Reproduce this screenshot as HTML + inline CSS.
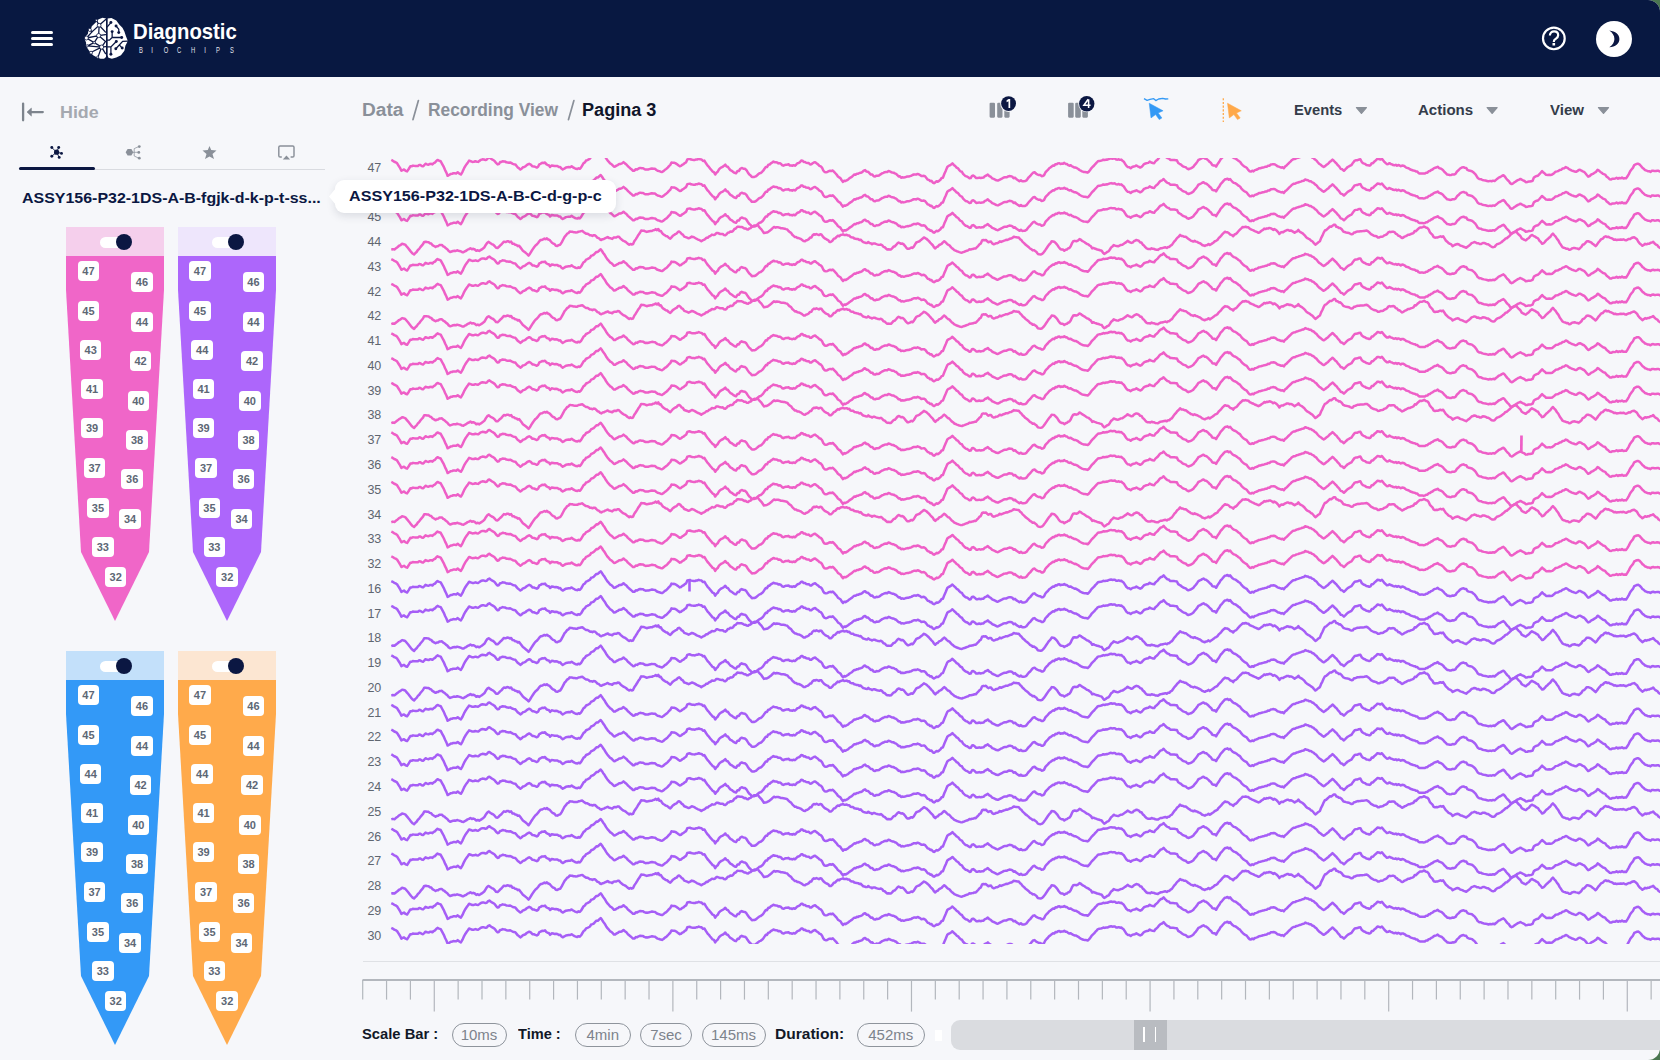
<!DOCTYPE html>
<html><head><meta charset="utf-8">
<style>
*{margin:0;padding:0;box-sizing:border-box}
html,body{width:1660px;height:1060px;overflow:hidden;background:#4a7650}
body{font-family:"Liberation Sans",sans-serif;position:relative}
#app{position:absolute;left:0;top:0;width:1660px;height:1060px;background:#f6f7fa;border-radius:0 12px 12px 0;overflow:hidden}
.abs{position:absolute}
#hdr{position:absolute;left:0;top:0;width:1660px;height:76.5px;background:#081841}
.t{position:absolute;white-space:nowrap;line-height:1}
.pill{position:absolute;height:24px;border:1.3px solid #8e949c;border-radius:12px;color:#7d838c;font-size:15px;line-height:21px;text-align:center}
.lbl{position:absolute;width:21.5px;height:20px;background:#fff;border-radius:4px;color:#5d6775;font-weight:bold;font-size:11px;line-height:20px;text-align:center}
.ch{position:absolute;font-size:12.5px;color:#5f6670;text-align:right;width:30px;line-height:1}
</style></head><body>
<div id="app">
<div id="hdr">
  <!-- hamburger -->
  <div class="abs" style="left:31px;top:31px;width:22px;height:2.6px;background:#fff;border-radius:2px"></div>
  <div class="abs" style="left:31px;top:37px;width:22px;height:2.6px;background:#fff;border-radius:2px"></div>
  <div class="abs" style="left:31px;top:43px;width:22px;height:2.6px;background:#fff;border-radius:2px"></div>
  <!-- logo -->
  <svg class="abs" style="left:80px;top:12px" width="55" height="52" viewBox="0 0 1121 1060">
    <path fill="#fff" d="M530 130 L460 118 L380 150 L335 200 L240 290 L225 345 L170 385 L160 450 L105 505 L100 565 L125 625 L120 690 L165 760 L215 830 L275 885 L350 925 L420 955 L490 955 L530 915 Z"/>
    <path fill="#fff" d="M560 135 L640 122 L740 175 L800 255 L865 320 L905 400 L935 490 L975 590 L925 690 L905 790 L835 880 L740 925 L650 955 L580 935 L560 880 Z"/>
    <g stroke="#0b1742" stroke-width="26" fill="none" stroke-linecap="round">
      <path d="M390 270 L530 150 M390 270 L250 400 M390 270 L520 410 M390 270 L380 480 M390 270 L335 170 M380 480 L130 530 M380 480 L520 460 M380 480 L520 600 M380 480 L290 625 M130 530 L250 400 M200 370 L250 400 M130 530 L290 625 M290 625 L440 715 M440 715 L520 600 M440 715 L525 705 M440 715 L370 910 M440 715 L520 850 M440 715 L150 690 M440 715 L230 820 M150 690 L290 625"/>
      <path d="M560 300 L630 215 M735 285 L790 350 L790 420 M655 400 L655 520 L600 575 L560 575 M655 520 L850 520 M740 600 L630 710 L560 710 M630 710 L630 860 M975 595 L870 600 L730 750 M810 680 L860 735"/>
    </g>
    <g fill="#0b1742"><circle cx="630" cy="215" r="30"/><circle cx="735" cy="285" r="30"/><circle cx="790" cy="420" r="30"/><circle cx="655" cy="400" r="30"/><circle cx="850" cy="520" r="30"/><circle cx="740" cy="600" r="30"/><circle cx="630" cy="860" r="30"/><circle cx="730" cy="750" r="30"/><circle cx="860" cy="735" r="30"/></g>
    <g fill="#fff" stroke="#0b1742" stroke-width="16"><circle cx="390" cy="270" r="38"/><circle cx="380" cy="480" r="42"/><circle cx="440" cy="715" r="42"/><circle cx="130" cy="530" r="40"/><circle cx="200" cy="365" r="32"/><circle cx="335" cy="170" r="22"/><circle cx="290" cy="625" r="24"/><circle cx="145" cy="690" r="24"/><circle cx="225" cy="830" r="30"/><circle cx="360" cy="920" r="22"/></g>
    <path fill="#0b1742" d="M533 100 L558 100 L558 990 L533 990 Z"/>
  </svg>
<div class="t" style="left:130.5px;top:44.95px;width:20px;text-align:center;font-size:9.7px;color:#e4e7ee;transform:scaleX(0.6)">B</div><div class="t" style="left:142.4px;top:44.95px;width:20px;text-align:center;font-size:9.7px;color:#e4e7ee;transform:scaleX(0.6)">I</div><div class="t" style="left:155.6px;top:44.95px;width:20px;text-align:center;font-size:9.7px;color:#e4e7ee;transform:scaleX(0.6)">O</div><div class="t" style="left:169.2px;top:44.95px;width:20px;text-align:center;font-size:9.7px;color:#e4e7ee;transform:scaleX(0.6)">C</div><div class="t" style="left:182.6px;top:44.95px;width:20px;text-align:center;font-size:9.7px;color:#e4e7ee;transform:scaleX(0.6)">H</div><div class="t" style="left:195.2px;top:44.95px;width:20px;text-align:center;font-size:9.7px;color:#e4e7ee;transform:scaleX(0.6)">I</div><div class="t" style="left:208.3px;top:44.95px;width:20px;text-align:center;font-size:9.7px;color:#e4e7ee;transform:scaleX(0.6)">P</div><div class="t" style="left:221.8px;top:44.95px;width:20px;text-align:center;font-size:9.7px;color:#e4e7ee;transform:scaleX(0.6)">S</div>
  <!-- help -->
  <svg class="abs" style="left:1536px;top:20px" width="36" height="36" viewBox="1536 20 36 36">
   <circle cx="1553.85" cy="38.4" r="10.85" stroke="#fff" stroke-width="2.2" fill="none"/>
   <path d="M1549.9 35.6 C1549.9 33 1551.7 31.4 1554.1 31.4 C1556.5 31.4 1558.2 33 1558.2 35.2 C1558.2 37.4 1556.6 38.2 1555.3 39.1 C1554.3 39.8 1553.8 40.5 1553.8 41.9" stroke="#fff" stroke-width="2.2" fill="none"/>
   <rect x="1552.5" y="43" width="2.6" height="2.5" fill="#fff"/>
  </svg>
  <!-- moon -->
  <div class="abs" style="left:1596px;top:20.5px;width:36px;height:36px;background:#fff;border-radius:50%"></div>
  <svg class="abs" style="left:1596px;top:20.5px" width="36" height="36" viewBox="0 0 36 36"><path fill="#0b1742" d="M13.3 9.5 C19.5 10.2 23.4 13.5 23.4 17.9 C23.4 22.5 19.5 25.8 13.3 26.3 C16.7 24 18.4 21 18.4 17.9 C18.4 14.8 16.7 11.8 13.3 9.5 Z"/></svg>
</div>

<!-- left panel -->
<svg class="abs" style="left:15px;top:98px" width="35" height="28" viewBox="15 98 35 28"><g stroke="#7d848d" stroke-width="2.3" stroke-linecap="round" fill="none"><path d="M23.1 103.6 L23.1 120.3 M30.5 112.1 L42.8 112.1"/></g><path d="M27 112.1 L31.4 108.1 L31.4 116.1 Z" fill="#7d848d" stroke="#7d848d" stroke-width="0.6" stroke-linejoin="round"/></svg>


<div class="abs" style="left:19px;top:168.5px;width:306px;height:1px;background:#d9dbe0"></div>
<div class="abs" style="left:18.5px;top:166.5px;width:76.5px;height:3.4px;background:#0b1742;border-radius:2px"></div>


<div class="abs" style="left:66px;top:227px;width:98px;height:29.5px;background:#f5cfec"></div>
<svg class="abs" style="left:66px;top:227px" width="98" height="396" viewBox="0 0 98 396"><polygon points="0,29 98,29 98,63 83,325 49,394 15,325 0,63" fill="#f066c8"/></svg>
<div class="abs" style="left:100px;top:237px;width:22px;height:10.5px;background:#fff;border-radius:6px"></div>
<div class="abs" style="left:116.3px;top:234px;width:16.2px;height:16.2px;background:#0b1742;border-radius:50%"></div>
<div class="lbl" style="left:77.65px;top:261.00px">47</div>
<div class="lbl" style="left:131.15px;top:272.30px">46</div>
<div class="lbl" style="left:77.65px;top:300.50px">45</div>
<div class="lbl" style="left:131.15px;top:311.60px">44</div>
<div class="lbl" style="left:79.95px;top:340.00px">43</div>
<div class="lbl" style="left:129.85px;top:351.00px">42</div>
<div class="lbl" style="left:81.25px;top:379.30px">41</div>
<div class="lbl" style="left:127.55px;top:390.50px">40</div>
<div class="lbl" style="left:81.25px;top:418.40px">39</div>
<div class="lbl" style="left:126.25px;top:429.70px">38</div>
<div class="lbl" style="left:83.75px;top:458.00px">37</div>
<div class="lbl" style="left:121.45px;top:469.30px">36</div>
<div class="lbl" style="left:87.15px;top:497.50px">35</div>
<div class="lbl" style="left:119.25px;top:508.80px">34</div>
<div class="lbl" style="left:92.05px;top:536.70px">33</div>
<div class="lbl" style="left:104.95px;top:567.30px">32</div>
<div class="abs" style="left:177.5px;top:227px;width:98px;height:29.5px;background:#eee6fc"></div>
<svg class="abs" style="left:177.5px;top:227px" width="98" height="396" viewBox="0 0 98 396"><polygon points="0,29 98,29 98,63 83,325 49,394 15,325 0,63" fill="#ad66fb"/></svg>
<div class="abs" style="left:211.5px;top:237px;width:22px;height:10.5px;background:#fff;border-radius:6px"></div>
<div class="abs" style="left:227.8px;top:234px;width:16.2px;height:16.2px;background:#0b1742;border-radius:50%"></div>
<div class="lbl" style="left:189.15px;top:261.00px">47</div>
<div class="lbl" style="left:242.65px;top:272.30px">46</div>
<div class="lbl" style="left:189.15px;top:300.50px">45</div>
<div class="lbl" style="left:242.65px;top:311.60px">44</div>
<div class="lbl" style="left:191.45px;top:340.00px">44</div>
<div class="lbl" style="left:241.35px;top:351.00px">42</div>
<div class="lbl" style="left:192.75px;top:379.30px">41</div>
<div class="lbl" style="left:239.05px;top:390.50px">40</div>
<div class="lbl" style="left:192.75px;top:418.40px">39</div>
<div class="lbl" style="left:237.75px;top:429.70px">38</div>
<div class="lbl" style="left:195.25px;top:458.00px">37</div>
<div class="lbl" style="left:232.95px;top:469.30px">36</div>
<div class="lbl" style="left:198.65px;top:497.50px">35</div>
<div class="lbl" style="left:230.75px;top:508.80px">34</div>
<div class="lbl" style="left:203.55px;top:536.70px">33</div>
<div class="lbl" style="left:216.45px;top:567.30px">32</div>
<div class="abs" style="left:66px;top:651px;width:98px;height:29.5px;background:#c3e0fa"></div>
<svg class="abs" style="left:66px;top:651px" width="98" height="396" viewBox="0 0 98 396"><polygon points="0,29 98,29 98,63 83,325 49,394 15,325 0,63" fill="#3399f7"/></svg>
<div class="abs" style="left:100px;top:661px;width:22px;height:10.5px;background:#fff;border-radius:6px"></div>
<div class="abs" style="left:116.3px;top:658px;width:16.2px;height:16.2px;background:#0b1742;border-radius:50%"></div>
<div class="lbl" style="left:77.65px;top:685.00px">47</div>
<div class="lbl" style="left:131.15px;top:696.30px">46</div>
<div class="lbl" style="left:77.65px;top:724.50px">45</div>
<div class="lbl" style="left:131.15px;top:735.60px">44</div>
<div class="lbl" style="left:79.95px;top:764.00px">44</div>
<div class="lbl" style="left:129.85px;top:775.00px">42</div>
<div class="lbl" style="left:81.25px;top:803.30px">41</div>
<div class="lbl" style="left:127.55px;top:814.50px">40</div>
<div class="lbl" style="left:81.25px;top:842.40px">39</div>
<div class="lbl" style="left:126.25px;top:853.70px">38</div>
<div class="lbl" style="left:83.75px;top:882.00px">37</div>
<div class="lbl" style="left:121.45px;top:893.30px">36</div>
<div class="lbl" style="left:87.15px;top:921.50px">35</div>
<div class="lbl" style="left:119.25px;top:932.80px">34</div>
<div class="lbl" style="left:92.05px;top:960.70px">33</div>
<div class="lbl" style="left:104.95px;top:991.30px">32</div>
<div class="abs" style="left:177.5px;top:651px;width:98px;height:29.5px;background:#fce6d2"></div>
<svg class="abs" style="left:177.5px;top:651px" width="98" height="396" viewBox="0 0 98 396"><polygon points="0,29 98,29 98,63 83,325 49,394 15,325 0,63" fill="#ffaa4b"/></svg>
<div class="abs" style="left:211.5px;top:661px;width:22px;height:10.5px;background:#fff;border-radius:6px"></div>
<div class="abs" style="left:227.8px;top:658px;width:16.2px;height:16.2px;background:#0b1742;border-radius:50%"></div>
<div class="lbl" style="left:189.15px;top:685.00px">47</div>
<div class="lbl" style="left:242.65px;top:696.30px">46</div>
<div class="lbl" style="left:189.15px;top:724.50px">45</div>
<div class="lbl" style="left:242.65px;top:735.60px">44</div>
<div class="lbl" style="left:191.45px;top:764.00px">44</div>
<div class="lbl" style="left:241.35px;top:775.00px">42</div>
<div class="lbl" style="left:192.75px;top:803.30px">41</div>
<div class="lbl" style="left:239.05px;top:814.50px">40</div>
<div class="lbl" style="left:192.75px;top:842.40px">39</div>
<div class="lbl" style="left:237.75px;top:853.70px">38</div>
<div class="lbl" style="left:195.25px;top:882.00px">37</div>
<div class="lbl" style="left:232.95px;top:893.30px">36</div>
<div class="lbl" style="left:198.65px;top:921.50px">35</div>
<div class="lbl" style="left:230.75px;top:932.80px">34</div>
<div class="lbl" style="left:203.55px;top:960.70px">33</div>
<div class="lbl" style="left:216.45px;top:991.30px">32</div>

<!-- breadcrumb -->
<svg class="abs" style="left:400px;top:95px" width="190" height="30" viewBox="400 95 190 30"><path d="M418.4 100.6 L413 119.6 M573.9 100.6 L568.5 119.6" stroke="#8a9099" stroke-width="1.7" stroke-linecap="round"/></svg>


<!-- toolbar -->

<div class="ch" style="left:351.3px;top:161.7px">47</div>
<div class="ch" style="left:351.3px;top:186.5px">46</div>
<div class="ch" style="left:351.3px;top:211.2px">45</div>
<div class="ch" style="left:351.3px;top:236.0px">44</div>
<div class="ch" style="left:351.3px;top:260.8px">43</div>
<div class="ch" style="left:351.3px;top:285.6px">42</div>
<div class="ch" style="left:351.3px;top:310.3px">42</div>
<div class="ch" style="left:351.3px;top:335.1px">41</div>
<div class="ch" style="left:351.3px;top:359.9px">40</div>
<div class="ch" style="left:351.3px;top:384.6px">39</div>
<div class="ch" style="left:351.3px;top:409.4px">38</div>
<div class="ch" style="left:351.3px;top:434.2px">37</div>
<div class="ch" style="left:351.3px;top:458.9px">36</div>
<div class="ch" style="left:351.3px;top:483.7px">35</div>
<div class="ch" style="left:351.3px;top:508.5px">34</div>
<div class="ch" style="left:351.3px;top:533.2px">33</div>
<div class="ch" style="left:351.3px;top:558.0px">32</div>
<div class="ch" style="left:351.3px;top:582.8px">16</div>
<div class="ch" style="left:351.3px;top:607.6px">17</div>
<div class="ch" style="left:351.3px;top:632.3px">18</div>
<div class="ch" style="left:351.3px;top:657.1px">19</div>
<div class="ch" style="left:351.3px;top:681.9px">20</div>
<div class="ch" style="left:351.3px;top:706.6px">21</div>
<div class="ch" style="left:351.3px;top:731.4px">22</div>
<div class="ch" style="left:351.3px;top:756.2px">23</div>
<div class="ch" style="left:351.3px;top:781.0px">24</div>
<div class="ch" style="left:351.3px;top:805.7px">25</div>
<div class="ch" style="left:351.3px;top:830.5px">26</div>
<div class="ch" style="left:351.3px;top:855.3px">27</div>
<div class="ch" style="left:351.3px;top:880.0px">28</div>
<div class="ch" style="left:351.3px;top:904.8px">29</div>
<div class="ch" style="left:351.3px;top:929.6px">30</div>
<svg class="abs" style="left:0;top:158px" width="1660" height="786" viewBox="0 158 1660 786">
<defs>
<path id="pA" d="M391.3 -7.52 L392.7 -6.82 L394.2 -5.75 L395.6 -5.22 L397.0 -4.35 L398.5 -1.93 L400.0 0.38 L401.4 3.24 L402.7 2.53 L404.0 1.98 L405.6 3.33 L407.1 3.88 L408.7 1.50 L410.3 -1.19 L411.6 -1.13 L412.8 -1.82 L414.1 -1.67 L415.4 -1.55 L416.6 -1.56 L417.9 -1.57 L419.2 -2.61 L420.4 -2.45 L421.7 -1.51 L423.0 -1.19 L424.2 -2.27 L425.5 -3.72 L427.1 -3.10 L428.6 -2.83 L429.9 -3.53 L431.2 -3.63 L432.4 -3.09 L433.7 -4.36 L435.0 -4.98 L436.2 -6.42 L437.5 -7.52 L439.1 -6.77 L440.7 -6.25 L442.2 -3.42 L443.8 -0.55 L445.1 2.59 L446.4 5.12 L447.6 8.31 L449.2 7.47 L450.8 6.41 L452.0 6.34 L453.3 5.75 L454.6 5.77 L456.2 5.89 L457.7 4.76 L459.3 6.10 L460.9 7.04 L462.5 4.31 L464.1 0.71 L465.3 -1.41 L466.6 -3.35 L467.9 -5.11 L469.1 -6.88 L470.7 -6.29 L472.3 -5.62 L473.9 -5.71 L475.4 -6.25 L476.7 -5.84 L478.0 -5.62 L479.5 -6.62 L480.9 -7.65 L482.4 -8.15 L484.0 -8.02 L485.6 -7.52 L486.8 -7.92 L488.1 -9.50 L489.4 -10.05 L490.6 -9.12 L491.9 -8.21 L493.2 -7.52 L494.6 -6.58 L496.1 -4.55 L497.6 -3.09 L498.9 -3.41 L500.1 -5.39 L501.4 -5.58 L502.6 -6.25 L503.9 -5.97 L505.2 -5.91 L506.4 -5.12 L507.7 -4.98 L509.0 -4.80 L510.2 -5.09 L511.5 -4.35 L512.8 -3.63 L514.0 -3.27 L515.3 -3.09 L516.6 -1.48 L517.8 -0.04 L519.1 0.84 L520.4 1.98 L521.6 1.18 L522.9 -0.18 L524.2 -0.55 L525.4 -1.12 L526.7 -2.36 L527.9 -3.09 L529.2 -3.72 L530.8 -2.91 L532.4 -1.19 L533.9 -1.11 L535.3 -0.53 L536.8 0.08 L538.1 -0.72 L539.3 -3.18 L540.6 -3.72 L542.1 -4.67 L543.5 -4.48 L545.0 -4.98 L546.3 -3.36 L547.6 -2.56 L548.8 -2.35 L550.1 -0.55 L551.7 -2.09 L553.2 -1.82 L554.6 -1.44 L556.0 -1.58 L557.4 -1.46 L558.8 -0.46 L560.2 -0.55 L561.5 1.11 L562.7 1.98 L564.3 1.08 L565.9 0.08 L567.3 -0.15 L568.7 -0.40 L570.2 -0.30 L571.6 -1.19 L573.1 -0.12 L574.5 0.69 L576.0 1.34 L577.3 1.54 L578.5 0.78 L579.8 1.34 L581.1 -0.09 L582.3 -2.11 L583.6 -4.35 L584.9 -5.11 L586.1 -6.96 L587.4 -7.43 L588.7 -8.15 L589.9 -8.86 L591.2 -10.83 L592.5 -11.25 L593.7 -11.83 L595.0 -13.21 L596.4 -14.70 L597.8 -14.66 L599.3 -16.05 L600.7 -17.26 L602.0 -15.55 L603.2 -13.60 L604.5 -11.95 L606.1 -9.18 L607.7 -6.88 L608.9 -5.63 L610.2 -4.04 L611.4 -3.48 L612.7 -2.17 L614.0 -0.81 L615.2 -0.98 L616.5 -1.89 L617.8 -2.45 L619.2 -3.50 L620.6 -3.57 L622.0 -4.11 L623.5 -5.36 L624.9 -4.13 L626.4 -3.08 L627.9 -1.19 L629.2 -0.13 L630.4 0.97 L631.7 2.03 L633.0 3.24 L634.4 3.18 L635.8 1.73 L637.2 1.99 L638.6 0.96 L640.2 0.38 L641.8 0.71 L643.1 0.74 L644.3 1.57 L645.6 2.07 L646.9 1.98 L648.1 2.03 L649.4 1.60 L650.7 1.27 L651.9 0.96 L653.5 1.21 L655.1 1.34 L656.4 2.50 L657.6 3.24 L659.1 3.60 L660.6 4.19 L662.0 4.51 L663.5 3.61 L664.9 2.29 L666.3 1.46 L667.7 0.08 L669.0 -1.41 L670.3 -2.57 L671.5 -4.98 L672.8 -4.66 L674.1 -4.72 L675.3 -4.35 L676.8 -3.43 L678.3 -2.25 L679.8 -1.19 L681.0 -1.57 L682.3 -2.74 L683.6 -3.34 L684.8 -4.47 L686.1 -5.21 L687.3 -8.06 L688.6 -8.40 L689.9 -8.63 L691.1 -7.96 L692.4 -7.73 L693.7 -7.61 L694.9 -7.52 L696.2 -8.09 L697.5 -8.12 L698.7 -8.78 L700.2 -8.21 L701.6 -8.02 L703.0 -6.48 L704.4 -6.88 L706.0 -4.22 L707.6 -1.82 L708.9 -0.54 L710.1 1.10 L711.4 2.53 L712.6 4.06 L713.9 4.58 L715.2 7.04 L716.4 5.28 L717.7 4.24 L719.0 1.87 L720.2 0.71 L721.5 -0.20 L722.8 -0.72 L724.0 -1.64 L725.3 -2.83 L726.6 -0.94 L727.8 -0.72 L729.1 1.12 L730.4 2.61 L731.8 3.28 L733.2 4.42 L734.6 5.38 L736.0 5.77 L737.5 3.48 L738.9 3.51 L740.3 1.27 L741.7 0.46 L743.3 1.15 L744.9 1.34 L746.3 2.45 L747.7 4.70 L749.1 6.71 L750.5 7.87 L751.9 9.57 L753.1 9.43 L754.4 9.44 L755.7 8.94 L756.9 7.94 L758.2 6.80 L759.5 5.77 L760.7 5.48 L762.0 4.46 L763.2 3.24 L764.5 1.24 L765.8 -0.55 L767.0 -0.45 L768.3 -2.74 L769.6 -2.88 L770.8 -4.19 L772.1 -4.94 L773.4 -5.87 L774.6 -5.32 L775.9 -5.20 L777.2 -4.98 L778.4 -4.12 L779.7 -4.27 L781.0 -3.63 L782.2 -2.23 L783.5 -1.82 L784.8 -2.50 L786.0 -2.86 L787.3 -2.83 L788.5 -3.19 L789.8 -2.04 L791.1 -2.06 L792.3 -1.63 L793.6 -2.33 L794.9 -1.82 L796.1 -2.83 L797.4 -4.26 L798.7 -4.58 L799.9 -5.30 L801.2 -6.88 L802.5 -6.78 L803.7 -5.48 L805.0 -5.62 L806.3 -4.63 L807.5 -4.42 L808.8 -4.43 L810.1 -3.09 L811.3 -3.15 L812.6 -4.26 L813.9 -5.01 L815.1 -5.36 L816.5 -4.18 L818.0 -3.13 L819.4 -1.69 L820.8 -1.19 L822.1 0.34 L823.3 3.02 L824.6 4.51 L826.0 4.79 L827.3 4.53 L828.7 3.68 L830.1 3.23 L831.5 3.61 L832.8 2.99 L834.1 4.38 L835.4 5.74 L836.6 7.04 L837.9 9.02 L839.2 9.88 L840.4 10.62 L841.7 12.77 L843.0 14.38 L844.2 13.15 L845.5 13.54 L846.7 12.79 L848.0 12.10 L849.3 10.87 L850.5 10.08 L851.8 9.37 L853.1 8.08 L854.3 7.04 L855.6 7.14 L856.9 6.26 L858.1 6.28 L859.4 5.52 L860.8 5.33 L862.2 4.65 L863.7 3.10 L865.1 2.61 L866.5 4.03 L867.9 4.15 L869.4 5.54 L870.8 7.04 L872.3 6.97 L873.7 8.69 L875.2 8.94 L876.5 8.20 L877.7 8.34 L879.0 8.05 L880.6 6.84 L882.2 5.77 L883.4 5.31 L884.7 4.65 L886.0 4.49 L887.2 4.60 L888.5 3.50 L889.8 3.92 L891.0 4.51 L892.3 5.09 L893.6 5.14 L894.8 5.91 L896.1 6.38 L897.3 7.47 L898.6 8.90 L899.9 8.77 L901.1 10.21 L902.4 9.77 L903.7 10.12 L904.9 9.83 L906.2 9.32 L907.5 9.07 L908.7 9.10 L910.0 8.62 L911.3 8.31 L912.5 7.50 L913.8 6.98 L915.1 6.94 L916.3 7.12 L917.6 6.41 L918.9 6.92 L920.1 7.52 L921.4 8.56 L922.6 8.41 L923.9 8.26 L925.2 8.94 L926.4 10.48 L927.7 12.10 L929.0 12.39 L930.2 13.65 L931.5 13.38 L932.8 15.06 L934.0 15.65 L935.3 14.85 L936.6 13.81 L937.8 14.20 L939.1 13.37 L940.4 12.22 L941.6 10.46 L942.9 10.21 L944.4 6.30 L945.8 3.14 L947.3 -0.55 L948.6 -1.61 L949.8 -2.05 L951.1 -2.94 L952.4 -4.10 L953.8 -2.59 L955.2 -1.45 L956.6 0.18 L958.1 0.96 L959.3 2.56 L960.6 3.85 L961.9 4.30 L963.1 6.41 L964.4 7.62 L965.7 8.65 L966.9 8.96 L968.2 9.78 L969.5 10.84 L970.7 10.61 L972.0 8.35 L973.2 8.05 L974.7 9.07 L976.2 10.61 L977.7 10.58 L979.2 10.12 L980.6 10.58 L982.1 10.21 L983.5 10.09 L984.9 8.58 L986.4 8.03 L987.8 7.04 L989.3 8.63 L990.7 9.25 L992.2 10.84 L993.6 11.38 L995.1 12.08 L996.5 12.84 L997.9 13.12 L999.4 12.34 L1000.9 11.53 L1002.3 10.84 L1003.7 10.02 L1005.1 9.80 L1006.5 9.79 L1007.9 9.05 L1009.3 8.56 L1010.7 8.66 L1012.2 9.08 L1013.6 10.75 L1015.0 10.21 L1016.5 11.75 L1018.0 12.71 L1019.4 13.62 L1020.9 12.69 L1022.3 13.85 L1023.7 13.80 L1025.1 13.62 L1026.4 12.91 L1027.7 11.14 L1028.9 9.65 L1030.2 8.55 L1031.4 7.04 L1033.0 5.20 L1034.6 4.76 L1036.2 6.27 L1037.8 7.04 L1039.0 7.54 L1040.3 7.55 L1041.6 8.66 L1042.8 8.56 L1044.1 7.64 L1045.4 4.92 L1046.6 3.61 L1047.9 2.39 L1049.2 0.71 L1050.4 -0.03 L1051.7 -1.05 L1053.0 -2.07 L1054.2 -1.77 L1055.5 -3.34 L1056.7 -3.15 L1058.0 -4.13 L1059.3 -4.37 L1060.5 -3.45 L1061.8 -3.89 L1063.1 -3.77 L1064.3 -4.61 L1065.6 -3.62 L1066.9 -3.53 L1068.1 -2.42 L1069.4 -1.82 L1070.7 -2.18 L1071.9 -1.25 L1073.2 -0.58 L1074.5 0.06 L1075.7 0.03 L1077.0 0.71 L1078.3 1.46 L1079.5 2.46 L1080.8 3.22 L1082.0 3.88 L1083.5 4.42 L1084.9 4.58 L1086.3 4.71 L1087.7 5.14 L1089.0 4.00 L1090.3 2.31 L1091.5 0.57 L1092.8 -0.78 L1094.1 -1.98 L1095.3 -3.44 L1096.6 -4.77 L1097.9 -6.25 L1099.2 -6.53 L1100.6 -6.74 L1102.0 -7.12 L1103.3 -7.80 L1104.7 -7.47 L1106.1 -7.90 L1107.3 -7.83 L1108.6 -8.37 L1109.9 -8.91 L1111.1 -9.16 L1112.4 -8.68 L1113.7 -8.88 L1114.9 -8.90 L1116.2 -7.90 L1117.5 -7.87 L1118.7 -8.23 L1120.0 -7.63 L1121.3 -7.90 L1122.5 -6.77 L1123.8 -5.80 L1125.1 -3.71 L1126.3 -1.82 L1127.8 -0.41 L1129.3 -0.27 L1130.7 0.71 L1132.2 -0.48 L1133.6 -0.96 L1135.0 -1.19 L1136.4 -2.07 L1137.7 -1.18 L1139.0 -0.58 L1140.2 0.08 L1141.5 -0.53 L1142.8 -1.95 L1144.0 -3.34 L1145.5 -3.98 L1146.9 -4.39 L1148.3 -4.64 L1149.7 -5.87 L1151.2 -5.01 L1152.7 -4.49 L1154.2 -4.35 L1155.4 -6.13 L1156.7 -7.19 L1157.9 -8.27 L1159.2 -10.03 L1160.5 -11.31 L1162.1 -11.88 L1163.6 -13.21 L1164.9 -11.73 L1166.2 -10.35 L1167.4 -9.42 L1168.9 -9.02 L1170.3 -7.55 L1171.7 -7.54 L1173.1 -7.52 L1174.4 -7.47 L1175.7 -7.23 L1176.9 -7.14 L1178.2 -4.49 L1179.5 -3.72 L1180.7 -3.06 L1182.0 -1.85 L1183.2 -1.03 L1184.5 -0.61 L1185.8 -0.25 L1187.0 1.01 L1188.3 1.72 L1189.6 1.22 L1190.8 0.86 L1192.1 0.11 L1193.4 -0.81 L1194.6 -2.48 L1195.9 -3.85 L1197.2 -5.64 L1198.4 -7.52 L1199.7 -8.08 L1201.0 -8.76 L1202.2 -9.50 L1203.5 -10.05 L1204.8 -9.01 L1206.0 -8.85 L1207.3 -7.90 L1208.5 -6.88 L1209.8 -5.40 L1211.1 -4.46 L1212.3 -2.45 L1213.6 -2.06 L1214.9 -2.08 L1216.1 -0.81 L1217.6 -3.50 L1219.1 -5.50 L1220.6 -8.15 L1222.0 -9.55 L1223.5 -11.38 L1225.0 -12.96 L1226.3 -13.11 L1227.5 -13.60 L1228.8 -12.49 L1230.1 -13.21 L1231.3 -11.76 L1232.6 -10.29 L1233.9 -9.42 L1235.4 -8.97 L1237.0 -7.90 L1238.5 -6.57 L1240.0 -5.77 L1241.4 -3.72 L1242.7 -2.38 L1244.0 -1.27 L1245.2 -0.55 L1246.7 0.24 L1248.2 2.38 L1249.7 3.88 L1250.9 4.10 L1252.2 3.24 L1253.5 3.88 L1254.9 2.59 L1256.2 2.23 L1257.6 1.75 L1259.0 0.84 L1260.4 0.71 L1261.7 0.30 L1263.0 -0.04 L1264.2 -0.33 L1265.5 -0.72 L1266.7 -0.86 L1268.0 -1.82 L1269.4 -1.78 L1270.9 -3.05 L1272.3 -3.14 L1273.7 -3.34 L1275.0 -3.00 L1276.2 -2.29 L1277.5 -1.19 L1278.8 -0.84 L1280.0 -0.43 L1281.3 0.13 L1282.6 -0.24 L1283.8 0.71 L1285.2 -1.11 L1286.6 -2.04 L1287.9 -3.47 L1289.3 -4.89 L1290.7 -6.17 L1292.0 -7.52 L1293.5 -8.42 L1295.0 -8.53 L1296.5 -9.42 L1297.9 -9.71 L1299.4 -10.29 L1300.9 -10.68 L1302.3 -11.30 L1303.7 -11.50 L1305.2 -12.80 L1306.6 -12.20 L1308.0 -12.00 L1309.4 -11.07 L1310.8 -11.07 L1312.2 -9.90 L1313.6 -9.42 L1315.0 -7.94 L1316.4 -7.06 L1317.8 -5.23 L1319.2 -3.72 L1320.7 -2.78 L1322.2 -1.44 L1323.7 -0.55 L1325.1 -1.39 L1326.6 -2.68 L1328.1 -3.72 L1329.6 -5.42 L1331.1 -6.56 L1332.5 -7.90 L1333.8 -6.74 L1335.1 -5.27 L1336.3 -4.35 L1337.8 -2.35 L1339.3 -0.81 L1340.7 1.34 L1342.3 1.81 L1343.9 3.24 L1345.2 2.00 L1346.4 0.76 L1347.7 -0.48 L1349.0 -1.19 L1350.2 -1.86 L1351.5 -2.45 L1353.1 -4.85 L1354.7 -6.88 L1356.1 -7.16 L1357.5 -7.33 L1358.9 -7.98 L1360.4 -8.15 L1361.9 -5.29 L1363.5 -4.10 L1364.9 -3.64 L1366.4 -2.56 L1367.8 -2.35 L1369.2 -1.82 L1370.5 -2.26 L1371.7 -4.36 L1373.0 -4.35 L1374.5 -6.10 L1376.0 -7.22 L1377.4 -8.78 L1378.9 -8.57 L1380.4 -7.94 L1381.9 -8.78 L1383.1 -7.31 L1384.4 -5.60 L1385.7 -4.42 L1386.9 -3.34 L1388.2 -3.50 L1389.5 -4.35 L1390.7 -3.54 L1392.0 -3.14 L1393.2 -2.45 L1394.5 -2.19 L1395.8 -2.68 L1397.0 -1.79 L1398.3 -2.50 L1399.6 -1.97 L1400.8 -1.22 L1402.1 -1.98 L1403.4 -1.82 L1404.8 -1.05 L1406.2 0.12 L1407.5 0.47 L1408.9 0.93 L1410.3 1.98 L1411.8 2.49 L1413.3 3.03 L1414.8 3.24 L1416.0 4.06 L1417.3 4.08 L1418.5 5.54 L1419.8 6.07 L1421.1 6.03 L1422.3 6.03 L1423.6 6.12 L1424.9 6.03 L1426.1 5.20 L1427.4 5.19 L1428.7 3.75 L1429.9 3.57 L1431.2 2.48 L1432.5 1.98 L1433.7 0.89 L1435.0 0.31 L1436.4 0.02 L1437.7 -0.78 L1439.1 0.58 L1440.4 0.98 L1441.8 1.62 L1443.1 2.75 L1444.5 4.48 L1445.8 5.62 L1447.2 7.08 L1448.6 7.19 L1449.9 7.63 L1451.3 7.49 L1452.6 6.89 L1454.0 7.08 L1455.5 6.38 L1457.0 4.03 L1458.5 2.79 L1460.1 0.98 L1461.8 0.07 L1463.5 -0.37 L1464.8 0.35 L1466.2 0.46 L1467.5 2.47 L1468.9 3.05 L1470.2 3.29 L1471.9 3.73 L1473.6 5.05 L1475.0 6.31 L1476.3 8.08 L1477.7 10.47 L1479.3 11.57 L1480.9 11.65 L1482.4 12.50 L1484.0 12.81 L1485.5 13.06 L1487.0 13.47 L1488.5 13.85 L1490.1 13.39 L1491.6 13.72 L1493.1 13.13 L1494.6 13.58 L1496.0 12.38 L1497.3 11.34 L1498.7 10.06 L1500.3 9.46 L1501.9 8.44 L1503.4 7.76 L1504.8 9.01 L1506.2 10.97 L1507.5 12.50 L1508.9 13.68 L1510.2 15.77 L1511.6 16.56 L1512.8 16.10 L1514.1 15.05 L1515.4 14.19 L1516.6 13.37 L1517.9 12.55 L1519.1 12.02 L1520.4 11.41 L1521.7 12.14 L1523.1 12.85 L1524.5 13.49 L1525.8 14.66 L1527.2 14.53 L1528.5 14.05 L1529.9 14.08 L1531.2 13.85 L1532.6 13.28 L1533.9 10.02 L1535.3 9.11 L1536.7 8.45 L1538.0 8.16 L1539.4 6.73 L1540.7 5.24 L1542.1 3.69 L1543.4 5.06 L1544.8 6.05 L1546.1 7.35 L1547.7 7.41 L1549.2 7.23 L1550.7 7.42 L1552.2 7.08 L1554.3 5.45 L1555.6 4.15 L1557.0 3.89 L1558.3 3.58 L1559.7 2.59 L1561.1 2.34 L1562.6 1.06 L1564.2 0.76 L1565.8 -0.37 L1567.4 0.30 L1569.0 1.66 L1570.5 2.34 L1571.9 3.12 L1573.2 3.46 L1574.6 4.05 L1576.0 4.37 L1577.3 3.66 L1578.7 2.51 L1580.0 2.34 L1581.4 3.01 L1582.7 3.86 L1584.1 4.37 L1585.4 5.76 L1586.8 7.50 L1588.2 9.11 L1589.7 8.48 L1591.3 6.99 L1592.9 6.40 L1594.5 5.28 L1596.1 4.36 L1597.6 2.34 L1599.0 3.16 L1600.4 4.42 L1601.7 5.33 L1603.1 6.40 L1605.1 7.08 L1606.7 9.21 L1608.3 10.35 L1609.8 11.82 L1611.2 11.95 L1612.6 11.18 L1613.9 11.23 L1615.3 11.04 L1616.6 10.21 L1618.0 11.18 L1619.3 10.47 L1620.7 10.87 L1622.0 10.00 L1623.4 10.98 L1624.8 10.74 L1626.1 10.87 L1627.5 8.82 L1628.8 6.58 L1630.2 3.70 L1631.5 1.95 L1632.9 0.35 L1634.2 -2.40 L1635.6 -3.06 L1637.0 -3.67 L1638.3 -3.76 L1639.7 -2.89 L1641.0 -1.49 L1642.4 0.31 L1643.7 1.27 L1645.1 2.61 L1646.4 3.00 L1647.8 3.69 L1649.2 3.72 L1650.5 4.38 L1651.9 3.33 L1653.2 3.22 L1654.6 3.59 L1655.9 3.54 L1657.3 3.29 L1658.6 3.33 L1660.0 4.10 L1661.3 3.48 L1662.7 3.80 L1664.1 3.58 L1665.4 3.29" fill="none" stroke-linejoin="round"/>
<path id="pB" d="M391.3 7.93 L392.9 7.33 L394.5 7.68 L396.1 6.34 L397.7 5.15 L399.1 3.90 L400.6 3.20 L402.1 1.98 L403.7 2.38 L405.2 2.87 L406.7 4.65 L408.2 6.37 L409.7 8.31 L411.1 10.17 L412.6 11.76 L414.1 12.74 L415.4 11.18 L416.6 10.20 L417.9 8.20 L419.2 7.04 L420.4 5.33 L421.7 3.83 L423.0 2.37 L424.2 0.08 L425.7 0.03 L427.2 0.22 L428.6 0.34 L429.9 1.38 L431.2 1.74 L432.4 3.25 L434.0 4.20 L435.6 5.15 L436.9 4.43 L438.1 4.33 L439.4 3.31 L440.7 3.25 L441.9 3.17 L443.2 4.53 L444.5 5.15 L445.9 6.51 L447.3 7.48 L448.7 9.26 L450.1 10.21 L451.6 9.69 L453.1 9.15 L454.6 8.94 L455.8 9.18 L457.1 8.51 L458.4 8.89 L459.6 9.20 L460.9 9.61 L462.2 10.35 L463.4 10.46 L464.8 9.59 L466.2 8.95 L467.6 7.80 L469.0 7.33 L470.4 6.41 L471.9 7.43 L473.3 7.01 L474.8 7.68 L476.3 9.04 L477.8 8.46 L479.2 9.20 L480.5 8.36 L481.8 7.57 L483.0 6.66 L484.5 5.39 L485.9 2.93 L487.3 0.97 L488.7 0.08 L490.2 1.23 L491.7 2.23 L493.2 2.87 L494.6 4.19 L496.1 6.01 L497.6 6.16 L498.9 4.97 L500.1 3.72 L501.4 2.70 L502.6 1.23 L503.9 -0.17 L505.5 0.24 L507.1 -0.55 L508.4 -0.45 L509.8 0.40 L511.1 -0.16 L512.5 1.91 L513.9 2.03 L515.2 3.04 L516.6 3.25 L517.8 4.34 L519.1 3.88 L520.4 5.57 L521.6 7.16 L522.9 8.94 L524.3 9.97 L525.7 11.05 L527.2 12.32 L528.6 13.75 L530.0 11.83 L531.4 9.46 L532.8 7.32 L534.3 5.15 L535.5 3.69 L536.8 2.69 L538.1 1.15 L539.3 -0.48 L540.6 -1.82 L541.9 -1.91 L543.1 -2.53 L544.4 -3.22 L545.7 -2.61 L546.9 -3.46 L548.2 -2.32 L549.5 -1.87 L550.7 -0.55 L552.0 0.95 L553.2 1.79 L554.5 2.21 L555.8 3.88 L557.3 4.12 L558.7 3.32 L560.2 2.87 L561.7 0.57 L563.2 -2.29 L564.6 -4.98 L565.9 -6.36 L567.2 -8.20 L568.4 -8.62 L569.7 -10.30 L571.0 -10.11 L572.2 -10.05 L573.5 -9.64 L574.8 -9.56 L576.0 -9.41 L577.3 -9.48 L578.5 -10.18 L579.8 -10.37 L581.1 -10.68 L582.3 -10.94 L583.6 -9.82 L584.9 -8.91 L586.1 -8.17 L587.4 -8.15 L588.7 -7.45 L589.9 -6.50 L591.2 -6.54 L592.5 -5.93 L593.7 -6.62 L595.0 -6.50 L596.3 -5.30 L597.5 -4.02 L598.8 -3.68 L600.1 -2.31 L601.3 -1.82 L602.6 -2.65 L603.9 -2.91 L605.1 -3.59 L606.4 -4.10 L607.7 -4.73 L609.2 -3.69 L610.8 -3.46 L612.2 -2.85 L613.6 -4.21 L614.9 -4.43 L616.3 -4.30 L617.7 -5.11 L619.0 -4.98 L620.6 -3.22 L622.2 -1.82 L623.5 -0.89 L624.7 -0.48 L626.0 0.34 L627.6 1.79 L629.2 2.87 L630.4 2.14 L631.7 2.80 L633.0 2.36 L634.3 -0.47 L635.7 -2.45 L637.1 -4.67 L638.4 -6.90 L639.8 -8.72 L641.2 -11.31 L642.6 -11.08 L644.0 -11.05 L645.3 -10.51 L646.7 -9.93 L648.1 -10.30 L649.4 -10.61 L650.7 -10.80 L651.9 -10.80 L653.2 -11.56 L654.5 -11.78 L655.7 -12.66 L657.0 -11.62 L658.3 -12.83 L659.5 -10.70 L660.8 -10.89 L662.0 -8.86 L663.3 -7.51 L664.6 -6.73 L665.8 -5.90 L667.1 -5.61 L668.7 -4.11 L670.3 -3.08 L671.5 -4.45 L672.8 -5.99 L674.1 -6.88 L675.3 -7.70 L676.6 -8.22 L677.9 -9.84 L679.1 -10.30 L680.4 -9.40 L681.7 -7.77 L682.9 -7.20 L684.2 -5.23 L685.7 -4.74 L687.1 -4.21 L688.6 -3.46 L690.2 -4.19 L691.8 -5.23 L693.0 -4.88 L694.3 -4.34 L695.6 -3.55 L696.8 -2.82 L698.1 -2.20 L699.7 -1.61 L701.3 -0.55 L702.5 -1.40 L703.8 -1.99 L705.1 -2.69 L706.3 -3.97 L707.7 -3.94 L709.1 -5.41 L710.5 -5.87 L711.9 -7.19 L713.3 -6.88 L714.9 -7.15 L716.4 -8.78 L717.7 -8.79 L719.0 -8.28 L720.2 -7.83 L721.5 -7.77 L722.8 -7.83 L724.0 -6.75 L725.3 -6.50 L726.6 -7.46 L727.8 -9.06 L729.1 -9.24 L730.4 -10.30 L731.6 -10.06 L732.9 -10.68 L734.4 -12.83 L735.8 -13.34 L737.3 -15.11 L738.8 -14.95 L740.3 -14.77 L741.7 -14.85 L743.0 -14.19 L744.3 -13.37 L745.5 -13.42 L746.8 -12.51 L748.1 -12.32 L749.3 -13.28 L750.6 -13.68 L751.9 -15.05 L753.1 -15.60 L754.4 -16.37 L756.0 -16.07 L757.6 -17.01 L758.8 -15.20 L760.1 -13.77 L761.4 -12.48 L762.6 -10.71 L763.9 -8.78 L765.4 -9.13 L766.8 -9.28 L768.3 -10.04 L769.7 -11.09 L771.2 -12.26 L772.6 -13.67 L774.0 -14.85 L775.4 -14.18 L776.8 -14.62 L778.3 -14.48 L779.7 -14.09 L781.0 -13.48 L782.2 -13.48 L783.5 -13.31 L784.8 -13.12 L786.0 -12.71 L787.3 -12.32 L788.5 -10.83 L789.8 -9.66 L791.1 -8.96 L792.3 -7.11 L793.6 -5.93 L794.9 -4.73 L796.1 -4.75 L797.4 -3.77 L798.7 -3.72 L799.9 -3.18 L801.2 -2.57 L802.5 -1.53 L803.7 -0.71 L805.0 -0.55 L806.3 -1.52 L807.5 -1.83 L808.8 -2.70 L810.1 -4.22 L811.3 -4.27 L812.6 -6.49 L813.9 -7.51 L815.1 -7.08 L816.4 -7.75 L817.7 -7.22 L818.9 -6.71 L820.2 -7.51 L821.4 -7.32 L822.7 -5.45 L824.0 -4.01 L825.2 -3.08 L826.7 -2.32 L828.1 -1.74 L829.5 0.07 L830.9 0.08 L832.4 -1.15 L833.8 -3.04 L835.2 -3.41 L836.6 -4.98 L837.9 -6.11 L839.2 -5.58 L840.4 -6.71 L841.7 -6.95 L843.0 -7.51 L844.2 -6.74 L845.5 -6.84 L846.7 -7.06 L848.0 -6.25 L849.3 -6.33 L850.5 -4.77 L851.8 -4.40 L853.1 -4.43 L854.3 -3.30 L855.6 -3.08 L856.9 -2.71 L858.1 -2.70 L859.4 -1.79 L860.7 -2.15 L861.9 -0.76 L863.2 0.36 L864.5 0.72 L865.7 1.11 L867.0 1.29 L868.3 0.21 L869.5 1.28 L870.8 1.53 L872.0 2.39 L873.3 1.60 L874.6 1.57 L875.8 2.12 L877.1 2.56 L878.4 2.87 L879.6 3.06 L880.9 2.61 L882.2 3.47 L883.4 5.05 L884.7 5.37 L886.0 6.76 L887.2 7.68 L888.5 7.49 L889.8 7.73 L891.0 7.68 L892.3 6.27 L893.6 4.78 L894.8 4.59 L896.1 3.15 L897.3 1.67 L898.6 0.72 L899.9 1.26 L901.1 2.02 L902.4 1.79 L903.7 2.61 L904.9 4.05 L906.2 5.76 L907.5 7.04 L908.7 7.01 L910.0 6.48 L911.3 5.62 L912.5 6.16 L913.8 4.79 L915.1 2.65 L916.3 0.72 L917.9 0.09 L919.5 -0.55 L921.0 -1.92 L922.4 -2.99 L923.9 -4.35 L925.2 -3.66 L926.4 -3.03 L927.7 -1.82 L929.0 -0.67 L930.2 0.80 L931.5 2.20 L932.8 3.42 L934.0 5.48 L935.3 6.66 L936.6 5.16 L937.8 4.84 L939.1 3.21 L940.4 2.67 L941.6 2.01 L942.9 0.55 L944.2 -0.55 L945.4 0.29 L946.7 1.68 L947.9 2.83 L949.2 3.26 L950.5 4.77 L951.7 6.15 L953.0 7.03 L954.3 8.31 L955.5 8.76 L956.8 9.42 L958.1 9.85 L959.3 10.32 L960.6 10.63 L961.9 10.84 L963.1 10.29 L964.4 9.93 L965.7 9.39 L966.9 8.92 L968.2 8.52 L969.5 7.51 L970.7 7.68 L972.0 7.30 L973.2 7.16 L974.5 6.57 L975.8 6.66 L977.0 5.24 L978.3 4.02 L979.6 2.36 L980.8 1.76 L982.1 -1.34 L983.4 -1.82 L984.6 -1.56 L985.9 -1.82 L987.2 -0.48 L988.4 0.46 L989.7 -0.17 L991.0 -0.23 L992.2 1.56 L993.5 2.36 L994.8 2.14 L996.0 1.43 L997.3 1.33 L998.5 0.72 L999.8 -0.52 L1001.1 0.16 L1002.3 -0.44 L1003.6 -1.00 L1004.9 -1.44 L1006.1 -1.99 L1007.4 -1.88 L1008.7 -2.45 L1009.9 -3.08 L1011.2 -3.28 L1012.5 -4.00 L1013.7 -5.08 L1015.0 -4.73 L1016.3 -4.61 L1017.5 -4.40 L1018.8 -4.35 L1020.1 -2.60 L1021.3 -1.71 L1022.6 0.08 L1024.1 1.34 L1025.5 2.84 L1027.0 3.88 L1028.5 5.11 L1030.0 6.69 L1031.4 7.42 L1032.7 8.58 L1034.0 8.31 L1035.2 9.25 L1036.5 10.15 L1037.8 12.11 L1039.2 12.42 L1040.7 12.66 L1042.2 12.11 L1043.7 10.54 L1045.1 8.60 L1046.6 6.41 L1047.9 4.45 L1049.2 2.67 L1050.4 1.51 L1051.7 -0.55 L1053.0 -0.33 L1054.2 -0.11 L1055.5 1.09 L1057.1 2.76 L1058.6 5.15 L1060.1 6.99 L1061.5 7.74 L1062.9 7.75 L1064.3 8.94 L1065.6 7.98 L1066.9 7.63 L1068.1 6.58 L1069.4 6.16 L1070.7 4.39 L1071.9 1.66 L1073.2 -0.55 L1074.8 -0.94 L1076.4 -0.55 L1077.9 -1.16 L1079.5 -2.70 L1080.8 -2.10 L1082.0 -1.00 L1083.3 -0.28 L1084.6 0.42 L1085.8 1.35 L1087.1 2.22 L1088.4 2.62 L1089.6 3.63 L1090.9 4.48 L1092.2 6.66 L1093.4 6.12 L1094.7 6.71 L1096.0 7.15 L1097.2 7.67 L1098.5 7.93 L1100.1 8.46 L1101.7 8.94 L1102.9 10.73 L1104.2 12.11 L1105.7 11.31 L1107.1 10.13 L1108.6 9.58 L1109.9 7.74 L1111.1 5.65 L1112.4 4.77 L1113.7 3.25 L1115.1 3.84 L1116.6 4.28 L1118.1 4.51 L1119.5 3.84 L1120.9 3.18 L1122.4 2.95 L1123.8 1.98 L1125.1 1.02 L1126.3 0.31 L1127.6 -0.93 L1128.9 -0.05 L1130.1 0.50 L1131.4 1.09 L1132.6 0.84 L1133.9 -0.57 L1135.2 -1.22 L1136.4 -1.82 L1137.7 -1.47 L1139.0 -0.84 L1140.2 0.64 L1141.5 0.72 L1142.8 2.84 L1144.0 3.70 L1145.3 5.38 L1146.6 6.66 L1147.8 7.16 L1149.1 7.11 L1150.4 7.33 L1151.6 6.51 L1152.9 7.04 L1154.2 7.11 L1155.4 7.80 L1156.7 7.93 L1157.9 8.07 L1159.2 7.21 L1160.5 6.48 L1161.7 6.41 L1163.0 6.07 L1164.3 5.75 L1165.5 5.47 L1166.8 6.11 L1168.1 5.13 L1169.3 5.15 L1170.6 3.73 L1171.9 3.08 L1173.1 1.30 L1174.4 -0.55 L1175.8 -2.01 L1177.2 -3.94 L1178.7 -5.15 L1180.1 -6.88 L1181.5 -5.82 L1182.9 -5.71 L1184.4 -5.00 L1185.8 -4.98 L1187.0 -4.00 L1188.3 -2.90 L1189.6 -2.21 L1190.8 -1.18 L1192.1 -0.78 L1193.4 -0.21 L1194.6 -0.94 L1195.9 -0.19 L1197.2 0.08 L1198.4 0.88 L1199.7 1.29 L1201.0 2.10 L1202.2 3.20 L1203.5 3.63 L1204.8 4.14 L1206.0 3.43 L1207.3 3.11 L1208.5 2.22 L1209.8 3.27 L1211.1 2.36 L1212.3 1.55 L1213.6 0.68 L1214.9 -0.55 L1216.1 -1.00 L1217.4 -1.82 L1218.7 -3.70 L1219.9 -4.77 L1221.2 -6.11 L1222.5 -7.77 L1223.7 -8.89 L1225.0 -10.04 L1226.3 -9.52 L1227.5 -9.51 L1228.8 -8.78 L1230.3 -7.21 L1231.7 -6.90 L1233.2 -5.61 L1234.5 -7.32 L1235.8 -7.79 L1237.0 -8.78 L1238.4 -10.57 L1239.9 -12.18 L1241.3 -13.46 L1242.7 -14.85 L1244.1 -14.65 L1245.6 -15.09 L1247.0 -14.62 L1248.4 -14.47 L1249.7 -13.12 L1250.9 -12.54 L1252.2 -11.94 L1253.5 -11.42 L1254.7 -10.73 L1256.0 -10.24 L1257.3 -9.63 L1258.5 -9.03 L1260.0 -9.74 L1261.5 -11.01 L1263.0 -11.94 L1264.2 -13.19 L1265.5 -12.71 L1266.7 -13.40 L1268.0 -13.23 L1269.3 -13.84 L1270.5 -13.68 L1271.8 -13.03 L1273.1 -11.92 L1274.3 -12.70 L1275.6 -11.94 L1276.9 -10.96 L1278.1 -9.67 L1279.4 -7.77 L1280.7 -9.29 L1281.9 -9.76 L1283.2 -9.61 L1284.5 -10.63 L1285.7 -11.06 L1287.0 -11.79 L1288.3 -11.72 L1289.5 -11.02 L1290.8 -11.31 L1292.0 -10.83 L1293.3 -9.92 L1294.6 -9.03 L1295.8 -9.88 L1297.1 -10.48 L1298.4 -11.94 L1299.6 -10.20 L1300.9 -9.48 L1302.2 -8.76 L1303.4 -7.77 L1304.7 -6.53 L1306.0 -4.78 L1307.2 -3.74 L1308.5 -3.08 L1309.8 -2.35 L1311.0 -1.23 L1312.3 -0.55 L1313.9 1.26 L1315.4 2.87 L1316.9 1.75 L1318.4 0.41 L1319.9 -0.55 L1321.1 -3.72 L1322.4 -6.12 L1323.7 -9.18 L1324.9 -11.31 L1326.2 -11.80 L1327.5 -12.97 L1328.7 -14.09 L1330.0 -15.26 L1331.3 -15.05 L1332.5 -15.96 L1333.8 -17.01 L1335.1 -17.06 L1336.3 -15.08 L1337.6 -14.82 L1338.9 -13.73 L1340.1 -13.84 L1341.7 -12.51 L1343.3 -10.30 L1344.7 -9.73 L1346.1 -9.39 L1347.5 -9.09 L1349.0 -8.78 L1350.2 -8.08 L1351.5 -7.51 L1352.8 -7.77 L1354.0 -9.32 L1355.3 -9.41 L1356.6 -10.11 L1357.8 -10.42 L1359.1 -10.37 L1360.4 -10.64 L1361.6 -10.68 L1362.9 -10.70 L1364.2 -10.90 L1365.4 -11.14 L1366.7 -11.31 L1368.1 -10.45 L1369.5 -9.25 L1371.0 -7.64 L1372.4 -6.88 L1373.8 -6.10 L1375.2 -5.83 L1376.5 -5.48 L1377.9 -4.30 L1379.3 -4.35 L1380.6 -5.07 L1381.9 -5.13 L1383.1 -5.45 L1384.4 -6.47 L1385.7 -6.88 L1386.9 -7.64 L1388.2 -9.39 L1389.5 -10.04 L1390.7 -9.68 L1392.0 -9.97 L1393.2 -10.04 L1394.5 -9.71 L1395.8 -7.99 L1397.0 -7.65 L1398.3 -5.97 L1399.6 -5.77 L1400.8 -4.68 L1402.1 -3.72 L1403.4 -4.31 L1404.6 -5.23 L1405.9 -5.71 L1407.2 -6.50 L1408.4 -7.15 L1409.7 -7.17 L1411.0 -7.87 L1412.2 -8.25 L1413.5 -8.78 L1414.8 -10.88 L1416.0 -10.58 L1417.3 -12.09 L1418.5 -13.21 L1420.0 -14.39 L1421.4 -14.25 L1422.8 -14.65 L1424.2 -15.36 L1425.8 -14.22 L1427.4 -13.84 L1428.7 -12.33 L1429.9 -9.49 L1431.2 -8.15 L1432.5 -6.87 L1433.7 -4.62 L1435.0 -4.15 L1436.4 -4.43 L1437.7 -4.36 L1439.1 -4.96 L1440.4 -5.46 L1441.8 -4.89 L1443.1 -5.51 L1444.5 -3.37 L1445.8 -1.34 L1447.2 -0.09 L1448.6 1.34 L1449.9 1.94 L1451.3 2.67 L1452.6 4.38 L1454.2 3.43 L1455.8 2.69 L1457.4 2.21 L1458.6 2.46 L1459.9 3.51 L1461.1 3.96 L1462.4 4.28 L1463.7 4.99 L1464.9 5.41 L1466.2 6.01 L1467.5 4.90 L1468.9 3.91 L1470.2 2.80 L1471.6 1.27 L1473.0 0.79 L1474.3 0.27 L1475.7 0.59 L1477.0 1.51 L1478.4 1.44 L1479.7 2.21 L1481.1 2.21 L1482.8 1.15 L1484.5 1.27 L1485.7 1.73 L1487.0 2.44 L1488.2 2.49 L1489.5 3.40 L1490.8 4.43 L1492.0 5.14 L1493.3 5.33 L1494.6 5.06 L1496.0 3.33 L1497.3 2.29 L1498.7 1.94 L1500.1 1.23 L1501.4 0.48 L1502.8 -0.77 L1504.1 -1.71 L1505.5 -3.27 L1506.8 -3.53 L1508.2 -4.83 L1509.5 -5.90 L1510.9 -7.34 L1512.3 -8.89 L1513.6 -9.52 L1515.0 -9.69 L1516.3 -10.25 L1517.7 -8.27 L1519.0 -7.06 L1520.4 -5.83 L1521.7 -3.47 L1523.1 -2.68 L1524.5 -1.95 L1525.8 -1.44 L1527.3 -2.79 L1528.9 -3.83 L1530.4 -5.72 L1531.9 -6.86 L1533.4 -6.04 L1535.0 -5.28 L1536.5 -4.11 L1538.0 -3.47 L1539.4 -1.09 L1540.7 0.05 L1542.1 1.94 L1543.4 1.55 L1544.8 0.24 L1546.1 -1.44 L1547.5 -2.51 L1548.9 -3.94 L1550.2 -4.87 L1551.6 -6.93 L1552.9 -8.21 L1554.3 -6.56 L1555.6 -5.21 L1557.0 -2.97 L1558.3 -1.44 L1559.7 1.30 L1561.1 3.26 L1562.4 5.33 L1563.8 6.02 L1565.1 6.34 L1566.5 7.02 L1567.8 6.98 L1569.2 8.04 L1570.5 7.83 L1571.9 6.72 L1573.2 6.28 L1574.6 6.15 L1576.0 6.55 L1577.3 6.79 L1578.7 7.36 L1580.0 6.36 L1581.4 5.12 L1582.7 2.94 L1584.1 2.46 L1585.4 1.13 L1586.8 -0.49 L1588.2 -0.50 L1589.5 -0.09 L1591.0 0.49 L1592.6 1.88 L1594.1 3.04 L1595.6 4.38 L1597.0 2.79 L1598.3 0.82 L1599.7 -0.77 L1601.2 -2.68 L1602.7 -3.05 L1604.3 -4.87 L1605.8 -5.51 L1607.1 -4.73 L1608.5 -5.04 L1609.8 -4.15 L1611.2 -3.72 L1612.6 -3.10 L1613.9 -2.12 L1615.3 -2.37 L1616.6 -1.76 L1618.0 -1.98 L1619.3 -2.12 L1620.7 -2.39 L1622.0 -2.04 L1623.4 -2.47 L1624.8 -1.87 L1626.1 -1.44 L1627.5 -2.16 L1628.8 -2.83 L1630.2 -2.82 L1631.5 -3.79 L1632.9 -4.29 L1634.2 -4.56 L1635.6 -3.51 L1637.0 -2.45 L1638.3 -0.08 L1639.7 1.61 L1641.0 2.62 L1642.4 3.98 L1643.7 3.12 L1645.1 1.99 L1646.4 2.51 L1647.8 1.94 L1649.2 1.87 L1650.5 1.03 L1651.9 0.75 L1653.2 -0.09 L1654.6 1.66 L1655.9 2.76 L1657.3 3.41 L1658.6 5.17 L1660.0 6.01 L1661.3 6.62 L1662.7 6.13 L1664.1 6.88 L1665.4 7.36" fill="none" stroke-linejoin="round"/>
</defs>
<use href="#pA" transform="translate(0 167.50)" stroke="#ee5fc7" stroke-width="2.5"/>
<use href="#pA" transform="translate(0 192.27)" stroke="#ee5fc7" stroke-width="2.5"/>
<use href="#pA" transform="translate(0 217.04)" stroke="#ee5fc7" stroke-width="2.5"/>
<use href="#pB" transform="translate(0 241.81)" stroke="#ee5fc7" stroke-width="2.5"/>
<use href="#pA" transform="translate(0 266.58)" stroke="#ee5fc7" stroke-width="2.5"/>
<use href="#pA" transform="translate(0 291.35)" stroke="#ee5fc7" stroke-width="2.5"/>
<use href="#pB" transform="translate(0 316.12)" stroke="#ee5fc7" stroke-width="2.5"/>
<use href="#pA" transform="translate(0 340.89)" stroke="#ee5fc7" stroke-width="2.5"/>
<use href="#pA" transform="translate(0 365.66)" stroke="#ee5fc7" stroke-width="2.5"/>
<use href="#pA" transform="translate(0 390.43)" stroke="#ee5fc7" stroke-width="2.5"/>
<use href="#pB" transform="translate(0 415.20)" stroke="#ee5fc7" stroke-width="2.5"/>
<use href="#pA" transform="translate(0 439.97)" stroke="#ee5fc7" stroke-width="2.5"/>
<path d="M1521.3 451.5 L1521.5 435.4" stroke="#ee5fc7" stroke-width="2.7" fill="none"/>
<use href="#pA" transform="translate(0 464.74)" stroke="#ee5fc7" stroke-width="2.5"/>
<use href="#pA" transform="translate(0 489.51)" stroke="#ee5fc7" stroke-width="2.5"/>
<use href="#pB" transform="translate(0 514.28)" stroke="#ee5fc7" stroke-width="2.5"/>
<use href="#pA" transform="translate(0 539.05)" stroke="#ee5fc7" stroke-width="2.5"/>
<use href="#pA" transform="translate(0 563.82)" stroke="#ee5fc7" stroke-width="2.5"/>
<use href="#pA" transform="translate(0 588.59)" stroke="#a65ef6" stroke-width="2.5"/>
<path d="M689.5 580.4 L689.5 591.5" stroke="#a65ef6" stroke-width="2.6" fill="none"/>
<use href="#pA" transform="translate(0 613.36)" stroke="#a65ef6" stroke-width="2.5"/>
<use href="#pB" transform="translate(0 638.13)" stroke="#a65ef6" stroke-width="2.5"/>
<use href="#pA" transform="translate(0 662.90)" stroke="#a65ef6" stroke-width="2.5"/>
<use href="#pB" transform="translate(0 687.67)" stroke="#a65ef6" stroke-width="2.5"/>
<use href="#pA" transform="translate(0 712.44)" stroke="#a65ef6" stroke-width="2.5"/>
<use href="#pA" transform="translate(0 737.21)" stroke="#a65ef6" stroke-width="2.5"/>
<use href="#pA" transform="translate(0 761.98)" stroke="#a65ef6" stroke-width="2.5"/>
<use href="#pA" transform="translate(0 786.75)" stroke="#a65ef6" stroke-width="2.5"/>
<use href="#pB" transform="translate(0 811.52)" stroke="#a65ef6" stroke-width="2.5"/>
<use href="#pA" transform="translate(0 836.29)" stroke="#a65ef6" stroke-width="2.5"/>
<use href="#pA" transform="translate(0 861.06)" stroke="#a65ef6" stroke-width="2.5"/>
<use href="#pB" transform="translate(0 885.83)" stroke="#a65ef6" stroke-width="2.5"/>
<use href="#pA" transform="translate(0 910.60)" stroke="#a65ef6" stroke-width="2.5"/>
<use href="#pA" transform="translate(0 935.37)" stroke="#a65ef6" stroke-width="2.5"/>
</svg>


<svg class="abs" style="left:985px;top:92px" width="115" height="30" viewBox="985 92 115 30">
 <g fill="#8a9099">
 <rect x="989.6" y="102.7" width="5.4" height="15" rx="1.1"/><rect x="997.2" y="102.7" width="5.3" height="15" rx="1.1"/><rect x="1004.3" y="102.7" width="5.3" height="15" rx="1.1"/>
 <rect x="1068.1" y="102.7" width="5.6" height="15" rx="1.1"/><rect x="1075.2" y="102.7" width="5.6" height="15" rx="1.1"/><rect x="1082.3" y="102.7" width="5.6" height="15" rx="1.1"/>
 </g>
 <circle cx="1008.55" cy="103.6" r="8.3" fill="#f6f7f9"/><circle cx="1008.55" cy="103.6" r="7.45" fill="#0b1742"/>
 <path d="M1006.6 100.3 L1008.6 98.9 L1010.2 98.9 L1010.2 108 L1008.5 108 L1008.5 101.2 L1006.6 102.2 Z" fill="#fff"/>
 <circle cx="1086.75" cy="103.8" r="8.5" fill="#f6f7f9"/><circle cx="1086.75" cy="103.8" r="7.7" fill="#0b1742"/>
 <path d="M1088.2 99.3 L1083.9 105.3 L1090.6 105.3 M1088.6 99.2 L1088.6 108" stroke="#fff" stroke-width="1.55" fill="none" stroke-linejoin="miter"/>
</svg>
<svg class="abs" style="left:1140px;top:94px" width="110" height="30" viewBox="1140 94 110 30">
 <path d="M1144 98.7 L1147.1 100.3 L1150 99.4 L1153.7 98.7 L1155.8 100.6 L1158.6 99 L1162.7 98.4 L1165.5 99 L1168.3 98.8" stroke="#3399f5" stroke-width="1.3" fill="none" stroke-linejoin="round"/>
 <path d="M1149.2 103.2 L1163.1 110.8 L1158.2 112.9 L1161.9 118 L1159.2 119.6 L1155.6 114.6 L1151 117.9 Z" fill="#3399f5" stroke="#3399f5" stroke-width="0.5" stroke-linejoin="round"/>
 <line x1="1223.3" y1="98.2" x2="1223.3" y2="122" stroke="#ffa94a" stroke-width="1.3" stroke-dasharray="2.1 1.6"/>
 <path d="M1227.5 103.2 L1241.3 110.8 L1236.5 112.9 L1240.2 118 L1237.5 119.6 L1233.9 114.6 L1229.3 117.9 Z" fill="#ffa94a" stroke="#ffa94a" stroke-width="0.5" stroke-linejoin="round"/>
</svg>
<svg class="abs" style="left:1350px;top:100px" width="260" height="20" viewBox="1350 100 260 20">
 <g fill="#8a9099" stroke="#8a9099" stroke-width="1.3" stroke-linejoin="round">
 <path d="M1356.5 107.6 L1366.4 107.6 L1361.45 113.4 Z"/>
 <path d="M1487.2 107.6 L1497.1 107.6 L1492.15 113.4 Z"/>
 <path d="M1598.5 107.6 L1608.5 107.6 L1603.5 113.4 Z"/>
 </g>
</svg>
<svg class="abs" style="left:40px;top:140px" width="270" height="26" viewBox="40 140 270 26">
 <g stroke="#0b1742" stroke-width="0.9"><line x1="56.6" y1="152.2" x2="51.8" y2="147.5"/><line x1="56.6" y1="152.2" x2="58.7" y2="147.5"/><line x1="56.6" y1="152.2" x2="51.8" y2="156.2"/><line x1="56.6" y1="152.2" x2="59.2" y2="157.4"/><line x1="56.6" y1="152.2" x2="61.5" y2="153.4"/></g>
 <g fill="#0b1742"><circle cx="56.6" cy="152.2" r="2.6"/><circle cx="51.8" cy="147.5" r="1.45"/><circle cx="58.7" cy="147.5" r="1.45"/><circle cx="51.8" cy="156.2" r="1.45"/><circle cx="59.2" cy="157.4" r="1.45"/><circle cx="61.5" cy="153.4" r="1.45"/></g>
 <polygon points="133.35,152.2 131.4,155.5 127.6,155.5 125.65,152.2 127.6,148.9 131.4,148.9" fill="#8a9099"/>
 <path d="M133 152.3 L139 152.3 M134.2 152.3 L134.2 148.6 L138.8 146.6 M134.2 152.3 L134.2 156 L138.8 158.2" stroke="#8a9099" stroke-width="0.75" fill="none"/>
 <g fill="#8a9099"><circle cx="139.3" cy="146.6" r="1.4"/><circle cx="138.8" cy="152.4" r="1.4"/><circle cx="139.3" cy="158.2" r="1.4"/></g>
 <path fill="#8a9099" d="M209.5 146 L211.2 150.1 L216.5 150.6 L212.5 154 L214 159.1 L209.5 156.4 L205 159.1 L206.5 154 L202.5 150.6 L207.8 150.1 Z"/>
 <path d="M281.8 157 L280.1 157 Q278.8 157 278.8 155.7 L278.8 147.3 Q278.8 146 280.1 146 L292.7 146 Q294 146 294 147.3 L294 155.7 Q294 157 292.7 157 L290.6 157" stroke="#8a9099" stroke-width="1.45" fill="none"/>
 <path d="M282.8 159.6 L286.45 155.4 L290.1 159.6 Z" fill="#8a9099"/>
</svg>
<!-- tooltip -->
<div class="abs" style="left:335px;top:180px;width:280.5px;height:32.8px;background:#fff;border-radius:9px;box-shadow:0 3px 8px rgba(30,40,60,0.13)"></div>
<svg class="abs" style="left:326px;top:186px" width="12" height="22" viewBox="0 0 12 22"><path d="M10 2 L3 10.5 L10 19 Z" fill="#fff"/></svg>

<!-- bottom -->
<div class="abs" style="left:362.5px;top:961px;width:1300px;height:1.2px;background:#dfe1e5"></div>
<svg class="abs" id="ruler" style="left:0;top:970px" width="1660" height="50"><line x1="362.5" y1="10" x2="1660" y2="10" stroke="#b3b7bd" stroke-width="2"/><line x1="362.70" y1="10" x2="362.70" y2="29.6" stroke="#b3b7bd" stroke-width="1.2"/><line x1="386.56" y1="10" x2="386.56" y2="29.6" stroke="#b3b7bd" stroke-width="1.2"/><line x1="410.42" y1="10" x2="410.42" y2="29.6" stroke="#b3b7bd" stroke-width="1.2"/><line x1="434.28" y1="10" x2="434.28" y2="41.6" stroke="#b3b7bd" stroke-width="1.2"/><line x1="458.14" y1="10" x2="458.14" y2="29.6" stroke="#b3b7bd" stroke-width="1.2"/><line x1="482.00" y1="10" x2="482.00" y2="29.6" stroke="#b3b7bd" stroke-width="1.2"/><line x1="505.86" y1="10" x2="505.86" y2="29.6" stroke="#b3b7bd" stroke-width="1.2"/><line x1="529.72" y1="10" x2="529.72" y2="29.6" stroke="#b3b7bd" stroke-width="1.2"/><line x1="553.58" y1="10" x2="553.58" y2="29.6" stroke="#b3b7bd" stroke-width="1.2"/><line x1="577.44" y1="10" x2="577.44" y2="29.6" stroke="#b3b7bd" stroke-width="1.2"/><line x1="601.30" y1="10" x2="601.30" y2="29.6" stroke="#b3b7bd" stroke-width="1.2"/><line x1="625.16" y1="10" x2="625.16" y2="29.6" stroke="#b3b7bd" stroke-width="1.2"/><line x1="649.02" y1="10" x2="649.02" y2="29.6" stroke="#b3b7bd" stroke-width="1.2"/><line x1="672.88" y1="10" x2="672.88" y2="41.6" stroke="#b3b7bd" stroke-width="1.2"/><line x1="696.74" y1="10" x2="696.74" y2="29.6" stroke="#b3b7bd" stroke-width="1.2"/><line x1="720.60" y1="10" x2="720.60" y2="29.6" stroke="#b3b7bd" stroke-width="1.2"/><line x1="744.46" y1="10" x2="744.46" y2="29.6" stroke="#b3b7bd" stroke-width="1.2"/><line x1="768.32" y1="10" x2="768.32" y2="29.6" stroke="#b3b7bd" stroke-width="1.2"/><line x1="792.18" y1="10" x2="792.18" y2="29.6" stroke="#b3b7bd" stroke-width="1.2"/><line x1="816.04" y1="10" x2="816.04" y2="29.6" stroke="#b3b7bd" stroke-width="1.2"/><line x1="839.90" y1="10" x2="839.90" y2="29.6" stroke="#b3b7bd" stroke-width="1.2"/><line x1="863.76" y1="10" x2="863.76" y2="29.6" stroke="#b3b7bd" stroke-width="1.2"/><line x1="887.62" y1="10" x2="887.62" y2="29.6" stroke="#b3b7bd" stroke-width="1.2"/><line x1="911.48" y1="10" x2="911.48" y2="41.6" stroke="#b3b7bd" stroke-width="1.2"/><line x1="935.34" y1="10" x2="935.34" y2="29.6" stroke="#b3b7bd" stroke-width="1.2"/><line x1="959.20" y1="10" x2="959.20" y2="29.6" stroke="#b3b7bd" stroke-width="1.2"/><line x1="983.06" y1="10" x2="983.06" y2="29.6" stroke="#b3b7bd" stroke-width="1.2"/><line x1="1006.92" y1="10" x2="1006.92" y2="29.6" stroke="#b3b7bd" stroke-width="1.2"/><line x1="1030.78" y1="10" x2="1030.78" y2="29.6" stroke="#b3b7bd" stroke-width="1.2"/><line x1="1054.64" y1="10" x2="1054.64" y2="29.6" stroke="#b3b7bd" stroke-width="1.2"/><line x1="1078.50" y1="10" x2="1078.50" y2="29.6" stroke="#b3b7bd" stroke-width="1.2"/><line x1="1102.36" y1="10" x2="1102.36" y2="29.6" stroke="#b3b7bd" stroke-width="1.2"/><line x1="1126.22" y1="10" x2="1126.22" y2="29.6" stroke="#b3b7bd" stroke-width="1.2"/><line x1="1150.08" y1="10" x2="1150.08" y2="41.6" stroke="#b3b7bd" stroke-width="1.2"/><line x1="1173.94" y1="10" x2="1173.94" y2="29.6" stroke="#b3b7bd" stroke-width="1.2"/><line x1="1197.80" y1="10" x2="1197.80" y2="29.6" stroke="#b3b7bd" stroke-width="1.2"/><line x1="1221.66" y1="10" x2="1221.66" y2="29.6" stroke="#b3b7bd" stroke-width="1.2"/><line x1="1245.52" y1="10" x2="1245.52" y2="29.6" stroke="#b3b7bd" stroke-width="1.2"/><line x1="1269.38" y1="10" x2="1269.38" y2="29.6" stroke="#b3b7bd" stroke-width="1.2"/><line x1="1293.24" y1="10" x2="1293.24" y2="29.6" stroke="#b3b7bd" stroke-width="1.2"/><line x1="1317.10" y1="10" x2="1317.10" y2="29.6" stroke="#b3b7bd" stroke-width="1.2"/><line x1="1340.96" y1="10" x2="1340.96" y2="29.6" stroke="#b3b7bd" stroke-width="1.2"/><line x1="1364.82" y1="10" x2="1364.82" y2="29.6" stroke="#b3b7bd" stroke-width="1.2"/><line x1="1388.68" y1="10" x2="1388.68" y2="41.6" stroke="#b3b7bd" stroke-width="1.2"/><line x1="1412.54" y1="10" x2="1412.54" y2="29.6" stroke="#b3b7bd" stroke-width="1.2"/><line x1="1436.40" y1="10" x2="1436.40" y2="29.6" stroke="#b3b7bd" stroke-width="1.2"/><line x1="1460.26" y1="10" x2="1460.26" y2="29.6" stroke="#b3b7bd" stroke-width="1.2"/><line x1="1484.12" y1="10" x2="1484.12" y2="29.6" stroke="#b3b7bd" stroke-width="1.2"/><line x1="1507.98" y1="10" x2="1507.98" y2="29.6" stroke="#b3b7bd" stroke-width="1.2"/><line x1="1531.84" y1="10" x2="1531.84" y2="29.6" stroke="#b3b7bd" stroke-width="1.2"/><line x1="1555.70" y1="10" x2="1555.70" y2="29.6" stroke="#b3b7bd" stroke-width="1.2"/><line x1="1579.56" y1="10" x2="1579.56" y2="29.6" stroke="#b3b7bd" stroke-width="1.2"/><line x1="1603.42" y1="10" x2="1603.42" y2="29.6" stroke="#b3b7bd" stroke-width="1.2"/><line x1="1627.28" y1="10" x2="1627.28" y2="41.6" stroke="#b3b7bd" stroke-width="1.2"/><line x1="1651.14" y1="10" x2="1651.14" y2="29.6" stroke="#b3b7bd" stroke-width="1.2"/></svg>

<div class="pill" style="left:451.5px;top:1022.5px;width:55px">10ms</div>
<div class="pill" style="left:575px;top:1022.5px;width:55.5px">4min</div>
<div class="pill" style="left:640px;top:1022.5px;width:52px">7sec</div>
<div class="pill" style="left:701.5px;top:1022.5px;width:64px">145ms</div>
<div class="pill" style="left:857px;top:1022.5px;width:67.5px">452ms</div>
<div class="abs" style="left:934.5px;top:1029.5px;width:7px;height:11px;background:#fff"></div>
<div class="abs" style="left:951px;top:1019.5px;width:740px;height:30px;background:#dadce0;border-radius:9px"></div>
<div class="abs" style="left:1134px;top:1019.5px;width:33px;height:30px;background:#b9bcc1"></div>
<div class="abs" style="left:1143px;top:1026.5px;width:1.6px;height:15.5px;background:#fff"></div>
<div class="abs" style="left:1154.8px;top:1026.5px;width:1.6px;height:15.5px;background:#fff"></div>
<div class="t" style="left:133.05px;top:22.09px;font-size:21.30px;font-weight:bold;color:#ffffff;transform:scaleX(0.953);transform-origin:0 0">Diagnostic</div>
<div class="t" style="left:60.44px;top:104.51px;font-size:16.81px;font-weight:bold;color:#a5a9b0;transform:scaleX(1.063);transform-origin:0 0">Hide</div>
<div class="t" style="left:22.11px;top:190.86px;font-size:14.64px;font-weight:bold;color:#0b1742;transform:scaleX(1.091);transform-origin:0 0">ASSY156-P32-1DS-A-B-fgjk-d-k-p-t-ss...</div>
<div class="t" style="left:361.74px;top:101.00px;font-size:18.12px;font-weight:bold;color:#8a9099;transform:scaleX(1.055);transform-origin:0 0">Data</div>
<div class="t" style="left:427.54px;top:101.00px;font-size:18.12px;font-weight:bold;color:#8a9099;transform:scaleX(0.959);transform-origin:0 0">Recording View</div>
<div class="t" style="left:582.30px;top:101.00px;font-size:18.12px;font-weight:bold;color:#10152a;transform:scaleX(0.999);transform-origin:0 0">Pagina 3</div>
<div class="t" style="left:348.69px;top:188.58px;font-size:14.49px;font-weight:bold;color:#0b1742;transform:scaleX(1.113);transform-origin:0 0">ASSY156-P32-1DS-A-B-C-d-g-p-c</div>
<div class="t" style="left:1293.53px;top:102.47px;font-size:15.22px;font-weight:bold;color:#343c4a;transform:scaleX(0.967);transform-origin:0 0">Events</div>
<div class="t" style="left:1418.11px;top:102.47px;font-size:15.22px;font-weight:bold;color:#343c4a;transform:scaleX(0.987);transform-origin:0 0">Actions</div>
<div class="t" style="left:1549.60px;top:102.47px;font-size:15.22px;font-weight:bold;color:#343c4a;transform:scaleX(0.988);transform-origin:0 0">View</div>
<div class="t" style="left:362.04px;top:1026.44px;font-size:15.36px;font-weight:bold;color:#111827;transform:scaleX(0.960);transform-origin:0 0">Scale Bar :</div>
<div class="t" style="left:518.00px;top:1026.44px;font-size:15.36px;font-weight:bold;color:#111827;transform:scaleX(0.950);transform-origin:0 0">Time :</div>
<div class="t" style="left:775.19px;top:1026.44px;font-size:15.36px;font-weight:bold;color:#111827;transform:scaleX(1.012);transform-origin:0 0">Duration:</div>
</div>
</body></html>
